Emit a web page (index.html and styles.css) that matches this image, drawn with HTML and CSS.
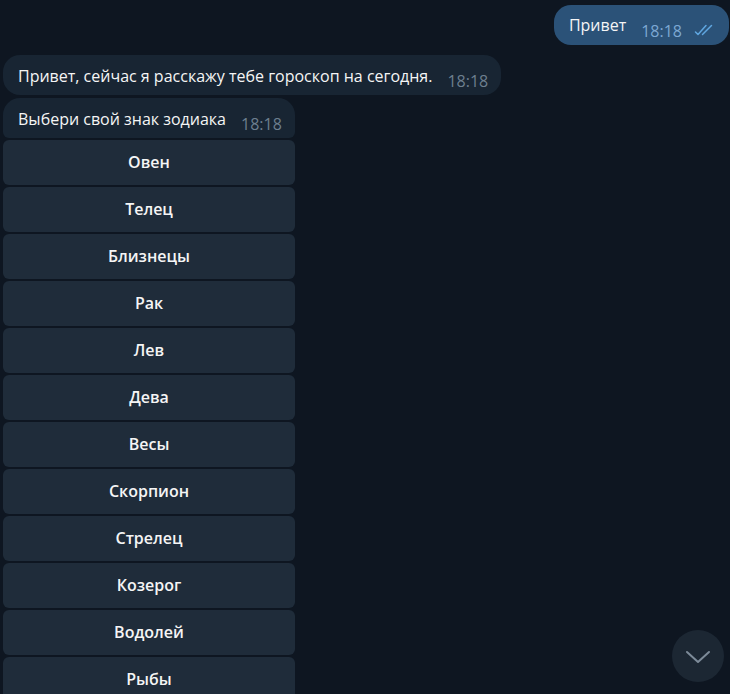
FILE: index.html
```html
<!DOCTYPE html>
<html lang="ru">
<head>
<meta charset="utf-8">
<link rel="stylesheet" href="styles.css">
</head>
<body>
<div class="chat">
  <div class="row out">
    <div class="bubble bubble-out">
      <span class="text">Привет</span>
      <span class="time">18:18</span>
      <svg class="checks" width="21" height="12" viewBox="0 0 21 12"><path d="M1.5 8l2.5 2.5L12 1.5M8.5 10.5L17.5 1.5" fill="none" stroke="#5fa6e0" stroke-width="1.5" stroke-linecap="round" stroke-linejoin="round"/></svg>
    </div>
  </div>
  <div class="row in">
    <div class="bubble bubble-in">
      <span class="text">Привет, сейчас я расскажу тебе гороскоп на сегодня.</span>
      <span class="time">18:18</span>
    </div>
  </div>
  <div class="row in">
    <div class="group">
      <div class="bubble bubble-in bubble-last">
        <span class="text">Выбери свой знак зодиака</span>
        <span class="time">18:18</span>
      </div>
      <div class="keyboard">
        <div class="kbtn">Овен</div>
        <div class="kbtn">Телец</div>
        <div class="kbtn">Близнецы</div>
        <div class="kbtn">Рак</div>
        <div class="kbtn">Лев</div>
        <div class="kbtn">Дева</div>
        <div class="kbtn">Весы</div>
        <div class="kbtn">Скорпион</div>
        <div class="kbtn">Стрелец</div>
        <div class="kbtn">Козерог</div>
        <div class="kbtn">Водолей</div>
        <div class="kbtn">Рыбы</div>
      </div>
    </div>
  </div>
</div>
<div class="scroll-down">
  <svg width="26" height="16" viewBox="0 0 26 16"><path d="M2 3l11 10L24 3" fill="none" stroke="#7d8b99" stroke-width="2" stroke-linecap="round" stroke-linejoin="round"/></svg>
</div>
</body>
</html>
```
FILE: styles.css
```css
html, body {
  margin: 0;
  padding: 0;
  background: #0e1621;
  height: 100%;
  overflow: hidden;
}
body {
  font-family: "Open Sans", "Noto Sans", sans-serif;
  color: #f5f5f5;
  font-size: 16px;
}
.chat {
  display: flex;
  flex-direction: column;
  padding: 5px 1px 0 3px;
}
.row {
  display: flex;
}
.row.out {
  justify-content: flex-end;
  margin-bottom: 10px;
}
.row.in {
  justify-content: flex-start;
  margin-bottom: 3px;
}
.bubble {
  display: flex;
  align-items: flex-end;
  height: 40px;
  box-sizing: border-box;
  padding: 0 13px 0 15px;
  border-radius: 17px;
}
.bubble-out {
  background: #2b5278;
  padding: 0 14px 0 15px;
}
.bubble-in {
  background: #182533;
}
.bubble-last {
  border-radius: 17px 17px 6px 6px;
}
.text {
  line-height: 22px;
  padding-bottom: 8px;
}
.bubble-out .text {
  padding-bottom: 9px;
}
.time {
  font-size: 16px;
  color: #6d7f8f;
  line-height: 20px;
  padding-bottom: 4px;
  margin-left: 15px;
}
.bubble-out .time {
  color: #7da8d3;
}
.checks {
  margin-left: 12px;
  margin-bottom: 9px;
}
.group {
  display: flex;
  flex-direction: column;
  width: 292px;
}
.keyboard {
  display: flex;
  flex-direction: column;
  gap: 2px;
  margin-top: 2px;
}
.kbtn {
  height: 45px;
  background: #1f2c3a;
  border-radius: 6px;
  display: flex;
  align-items: center;
  justify-content: center;
  font-weight: 600;
  font-size: 16px;
  color: #f5f5f5;
  padding-bottom: 2px;
  box-sizing: border-box;
}
.scroll-down {
  position: absolute;
  left: 672px;
  top: 630px;
  width: 52px;
  height: 52px;
  border-radius: 50%;
  background: #1c2733;
  display: flex;
  align-items: center;
  justify-content: center;
}
.scroll-down svg {
  margin-top: 2px;
}
```
